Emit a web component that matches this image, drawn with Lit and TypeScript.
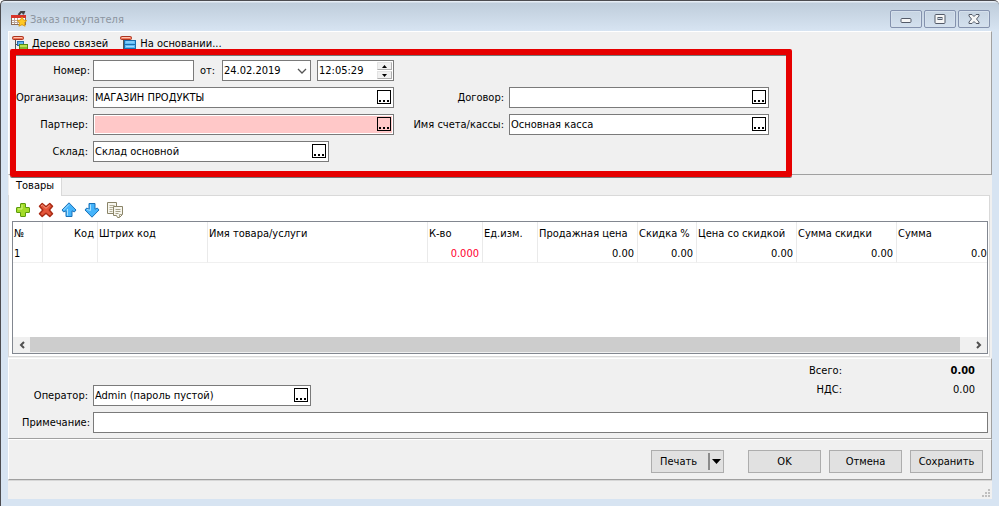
import { LitElement, html, css, svg, nothing } from "lit";
import { customElement, property } from "lit/decorators.js";
import { classMap } from "lit/directives/class-map.js";

const shared = css`
  *,
  *::before,
  *::after {
    box-sizing: border-box;
  }
  button,
  input,
  select {
    font: inherit;
    color: inherit;
    margin: 0;
    padding: 0;
    border: 0;
    border-radius: 0;
    background: none;
    outline: none;
  }
  svg {
    display: block;
    flex: none;
  }
`;

@customElement("lookup-field")
export class LookupField extends LitElement {
  @property() label = "";
  @property() value = "";
  @property({ type: Boolean }) required = false;

  static styles = [
    shared,
    css`
      :host {
        display: block;
        min-width: 0;
      }
      .box {
        display: flex;
        height: 21px;
        padding: 1px;
        border: 1px solid #7a7a7a;
        background: #fff;
      }
      .inner {
        display: flex;
        flex: 1;
        min-width: 0;
        padding: 1px;
        padding-left: 0;
      }
      .required {
        background: #ffc8c8;
      }
      input {
        flex: 1;
        min-width: 0;
      }
      button {
        display: flex;
        align-items: flex-end;
        justify-content: space-between;
        width: 14px;
        height: 14px;
        padding: 1px;
        border: 1px solid #000;
      }
      i {
        width: 2px;
        height: 2px;
        background: #000;
      }
    `,
  ];

  render() {
    return html`<div class="box">
      <div class=${classMap({ inner: true, required: this.required })}>
        <input type="text" aria-label=${this.label} .value=${this.value} />
        <button type="button" aria-label="Выбрать"><i></i><i></i><i></i></button>
      </div>
    </div>`;
  }
}

const orderIcon = svg`
  <path d="M7.500 4L10 1l3-.2-1 2.500" fill="none" stroke="#444" stroke-width="2"/>
  <rect x="0.5" y="4.500" width="14" height="9" fill="#fff" stroke="#8b6b55"/>
  <rect x="0" y="4" width="15" height="3" fill="#d8342a"/>
  <path d="M1 9.500H14M1 11.500H14M3.500 7V13M6.500 7V13" stroke="#b9a59b"/>
  <path d="M11 6l1.600 3 3.200.5-2.300 2.300.6 3.400L11 13.700 7.900 15.200l.6-3.400L6.200 9.500l3.200-.5z" fill="#ffc925" stroke="#d6930b" stroke-width=".8"/>`;
const linksIcon = svg`
  <path d="M3.500 4V13.500H8M3.500 8.500H6" fill="none" stroke="#555"/>
  <rect x=".5" y=".5" width="11" height="3" rx="1" fill="#f3785a" stroke="#a83420"/>
  <path d="M2 1.500h8" stroke="#ffc2ae"/>
  <rect x="5.500" y="5.500" width="6" height="4" fill="#62b6f0" stroke="#276eae"/>
  <rect x="7.500" y="8.500" width="8" height="7" fill="#b7e04c" stroke="#568c13"/>
  <path d="M8 12h7" stroke="#568c13"/>`;
const basisIcon = svg`
  <path d="M3.500 4V13.500H6" fill="none" stroke="#555"/>
  <rect x=".5" y=".5" width="11" height="3" rx="1" fill="#f3785a" stroke="#a83420"/>
  <path d="M2 1.500h8" stroke="#ffc2ae"/>
  <rect x="4.500" y="4.500" width="11" height="11" fill="#5dbcf7" stroke="#1b6eae"/>
  <path d="M5 8.500h10M5 12.500h10" stroke="#1b6eae"/>
  <path d="M6 6h8M6 10.500h8M6 14h8" stroke="#a5dcff"/>`;
const plusIcon = svg`<path d="M6 1.500h4q.5 0 .5.500v3.500h3.500q.5 0 .5.500v4q0 .5-.5.500h-3.500v3.500q0 .5-.5.500h-4q-.5 0-.5-.5v-3.500h-3.500q-.5 0-.5-.5v-4q0-.5.5-.5h3.500v-3.500q0-.5.500-.5z" fill="#a3dc28" stroke="#5b9a0e"/>
  <path d="M7 3v4h-4" fill="none" stroke="#d5f588"/>`;
const crossIcon = svg`<path d="M4.200 1.500L8 4.800 11.800 1.500 14.500 4.200 11.300 8 14.500 11.800 11.800 14.500 8 11.300 4.200 14.500 1.500 11.800 4.800 8 1.500 4.200z" fill="#e4553a" stroke="#a92b14" stroke-width="1.500" stroke-linejoin="round"/>
  <path d="M3 4l1.300-1L8 6.300 11.700 3" fill="none" stroke="#f59a84"/>`;
const upIcon = svg`<path d="M8 .8L15 8 13.300 10 11 8.800V14.500H5V8.800L2.700 10 1 8z" fill="#45b4fb" stroke="#1971b8" stroke-linejoin="round"/>
  <path d="M2.500 8L8 2.500M6.500 7v6.500" fill="none" stroke="#a8e0ff"/>`;
const downIcon = svg`<path d="M8 15.200L15 8 13.300 6 11 7.200V1.500H5V7.200L2.700 6 1 8z" fill="#45b4fb" stroke="#1971b8" stroke-linejoin="round"/>
  <path d="M6.500 2.500v6l-3.500-1" fill="none" stroke="#a8e0ff"/>`;
const copyIcon = svg`<path d="M.5.500h9v11h-9z" fill="#f7f6ee" stroke="#8a8468"/>
  <path d="M2.500 3.500h5M2.500 5.500h5M2.500 7.500h3M2.500 9.500h3" stroke="#b3ae98"/>
  <path d="M6.500 4.500h9v8l-3 3h-2l-1-2h-3z" fill="#f7f6ee" stroke="#8a8468"/>
  <path d="M8.500 7.500h5M8.500 9.500h5M8.500 11.500h3M15 12.500h-2.500V15" fill="none" stroke="#a5a088"/>`;

const icon = (body: unknown) =>
  html`<svg width="16" height="16" viewBox="0 0 16 16" aria-hidden="true">${body}</svg>`;

interface Column {
  title: string;
  value: string;
  size: string;
  right?: boolean;
  alert?: boolean;
}

const columns: Column[] = [
  { title: "№", value: "1", size: "c30" },
  { title: "Код", value: "", size: "c55", right: true },
  { title: "Штрих код", value: "", size: "c110" },
  { title: "Имя товара/услуги", value: "", size: "c220" },
  { title: "К-во", value: "0.000", size: "c55", alert: true },
  { title: "Ед.изм.", value: "", size: "c55" },
  { title: "Продажная цена", value: "0.00", size: "c100" },
  { title: "Скидка %", value: "0.00", size: "c59" },
  { title: "Цена со скидкой", value: "0.00", size: "c100" },
  { title: "Сумма скидки", value: "0.00", size: "c100" },
  { title: "Сумма", value: "0.00", size: "c100" },
];

@customElement("app-root")
export class AppRoot extends LitElement {
  static styles = [
    shared,
    css`
      :host {
        display: flex;
        flex-direction: column;
        min-height: 100vh;
        box-sizing: border-box;
        padding: 0 7px 7px;
        border-top: 1px solid #4c4c50;
        border-left: 1px solid #4c4c50;
        border-radius: 5px 5px 0 0;
        background: linear-gradient(#e6edf5 1px, #bfcddb 2px, #d7e4f2 30px, #d7e4f2);
        font: 11px/14px "DejaVu Sans Condensed", "Noto Sans", sans-serif;
        color: #000;
      }
      .title {
        display: flex;
        align-items: center;
        height: 30px;
        padding: 6px 2px 0 3px;
      }
      h1 {
        flex: 1;
        margin: 0 0 0 3px;
        padding-top: 2px;
        font-size: 11px;
        font-weight: 400;
        color: #8c95a0;
      }
      .sys {
        display: flex;
        gap: 2px;
      }
      .sys button {
        display: grid;
        place-items: center;
        width: 32px;
        height: 18px;
        border: 1px solid #8492ae;
        border-radius: 2px;
        box-shadow: inset 0 0 0 1px #d5e0ec;
      }
      .client {
        display: flex;
        flex-direction: column;
        flex: 1;
        background: #f0f0f0;
      }
      .head {
        position: relative;
        padding-bottom: 12px;
        border: 1px solid #fff;
        border-right-color: #a0a0a0;
        border-bottom-color: #a0a0a0;
      }
      .links {
        display: flex;
        gap: 12px;
        height: 22px;
        padding: 2px 3px 0;
      }
      .links button {
        display: flex;
        align-items: center;
        gap: 4px;
      }
      .form {
        display: grid;
        grid-template-columns: 84px 301px 115px 260px;
        row-gap: 6px;
        padding-top: 6px;
      }
      .label {
        align-self: center;
        padding-right: 5px;
        text-align: right;
        white-space: nowrap;
      }
      .near {
        padding-right: 3px;
      }
      .start {
        grid-column: 1;
      }
      .stock {
        width: 236px;
      }
      .stamp {
        display: flex;
        align-items: center;
      }
      .plain {
        height: 21px;
        padding: 0 1px;
        border: 1px solid #7a7a7a;
        background: #fff;
      }
      .number {
        width: 101px;
        margin-right: 6px;
      }
      .datebox {
        display: grid;
        align-items: center;
        width: 89px;
        margin: 0 6px 0 auto;
        background: #fff;
      }
      .datebox > * {
        grid-area: 1 / 1;
      }
      .datebox svg {
        justify-self: end;
        margin-right: 3px;
        pointer-events: none;
      }
      select {
        appearance: none;
      }
      .time {
        display: flex;
        align-items: center;
        width: 77px;
      }
      .time input {
        flex: 1;
        min-width: 0;
      }
      .spin {
        display: grid;
        gap: 1px;
      }
      .spin button {
        display: grid;
        place-items: center;
        width: 15px;
        height: 8px;
        background: #f0f0f0;
        border: 1px solid #adadad;
        border-top-color: #e3e3e3;
        border-left-color: #e3e3e3;
      }
      .marker {
        position: absolute;
        left: 1px;
        top: 17px;
        width: 782px;
        height: 128px;
        border: 6px solid #e60000;
        border-radius: 2px;
        box-shadow: 0 1px 0 #777, inset 0 1px 0 #777;
        pointer-events: none;
      }
      .tabs {
        display: flex;
        height: 20px;
        margin-top: 1px;
        padding-left: 1px;
        background: linear-gradient(#d9d9d9, #d9d9d9) 0 100% / calc(100% - 2px) 1px no-repeat;
      }
      .tabs button {
        width: 53px;
        border-right: 1px solid #d9d9d9;
        background: #fff;
      }
      .page {
        display: flex;
        flex-direction: column;
        flex: 1;
        margin-right: 2px;
        padding: 6px 1px 2px 3px;
        border: 1px solid #d9d9d9;
        border-top: 0;
        background: #fff;
      }
      .tools {
        display: flex;
        align-items: flex-start;
        gap: 7px;
        padding: 0 3px;
        height: 19px;
      }
      .grid {
        display: flex;
        flex-direction: column;
        flex: 1;
        min-height: 132px;
        border: 1px solid #828790;
        overflow: hidden;
      }
      .rows {
        flex: 1;
        width: 0;
        min-width: 100%;
        overflow: hidden;
      }
      table {
        width: 984px;
        table-layout: fixed;
        border-collapse: separate;
        border-spacing: 0;
      }
      th,
      td {
        padding: 2px 3px 0 1px;
        border-right: 1px solid #eaeaea;
        font-weight: 400;
        text-align: left;
        white-space: nowrap;
      }
      th {
        height: 22px;
      }
      td {
        height: 19px;
        border-bottom: 1px solid #f0f0f0;
      }
      .right {
        text-align: right;
      }
      .alert {
        color: #ff0030;
      }
      .c30 {
        width: 30px;
      }
      .c55 {
        width: 55px;
      }
      .c59 {
        width: 59px;
      }
      .c100 {
        width: 100px;
      }
      .c110 {
        width: 110px;
      }
      .c220 {
        width: 220px;
      }
      .scroll {
        display: flex;
        height: 16px;
        padding-bottom: 1px;
        background: #f0f0f0;
      }
      .scroll button {
        display: grid;
        place-items: center;
        width: 17px;
      }
      .track {
        flex: 1;
        padding-right: 10px;
      }
      .thumb {
        height: 100%;
        background: #cdcdcd;
      }
      .foot {
        display: grid;
        grid-template-columns: 84px 218px 1fr;
        row-gap: 6px;
        margin-top: 1px;
        padding: 4px 3px 5px 0;
        border: 1px solid #fff;
        border-right-color: #a0a0a0;
        border-bottom-color: #a0a0a0;
      }
      .operator {
        align-self: end;
      }
      .foot .label.operator {
        padding-bottom: 3px;
      }
      .totals {
        display: grid;
        grid-template-columns: auto 133px;
        align-content: start;
        justify-content: end;
        row-gap: 5px;
        height: 43px;
        margin: 0;
        padding: 1px 13px 0 0;
        text-align: right;
      }
      .totals dt,
      .totals dd {
        margin: 0;
      }
      .sum {
        font-weight: 700;
      }
      .note {
        grid-column: 2 / 4;
        width: 100%;
      }
      .actions {
        display: flex;
        justify-content: flex-end;
        gap: 8px;
        padding: 10px 8px 6px;
        border: 1px solid #fff;
        border-right-color: #a0a0a0;
        border-bottom-color: #a0a0a0;
      }
      .actions button {
        height: 23px;
        border: 1px solid #adadad;
        background: #e1e1e1;
      }
      .wide {
        width: 73px;
      }
      .actions .print {
        display: flex;
        align-items: center;
        justify-content: space-between;
        width: 73px;
        margin-right: 16px;
        padding: 0 1px 0 8px;
      }
      .drop {
        display: flex;
        align-items: center;
        height: 17px;
        padding-left: 1px;
        border-left: 2px solid #8a8a8a;
      }
      .status {
        display: flex;
        justify-content: flex-end;
        align-items: flex-end;
        height: 19px;
        padding: 2px;
        border-top: 1px solid #d7d7d7;
      }
    `,
  ];

  render() {
    return html`
      <header class="title">
        ${icon(orderIcon)}
        <h1>Заказ покупателя</h1>
        <div class="sys">
          <button type="button" aria-label="Свернуть">
            <svg width="12" height="10"><rect x="1" y="4.500" width="10" height="4" rx="1" fill="#f6f6f6" stroke="#535a68" /></svg>
          </button>
          <button type="button" aria-label="Развернуть">
            <svg width="12" height="10">
              <rect x="1" y=".5" width="10" height="9" rx="1" fill="#f6f6f6" stroke="#535a68" />
              <rect x="4" y="3.500" width="4" height="2" fill="#c9d5e2" stroke="#535a68" />
            </svg>
          </button>
          <button type="button" aria-label="Закрыть">
            <svg width="12" height="10">
              <path d="M1 .5h3l2 2 2-2h3v1.500l-2.500 3 2.500 3v1.500h-3l-2-2-2 2h-3V8l2.500-3L1 2z" fill="#f6f6f6" stroke="#535a68" />
            </svg>
          </button>
        </div>
      </header>
      <main class="client">
        <section class="head">
          <div class="links">
            <button type="button">${icon(linksIcon)}Дерево связей</button>
            <button type="button">${icon(basisIcon)}На основании...</button>
          </div>
          <div class="form">
            <label class="label near" for="number">Номер:</label>
            <div class="stamp">
              <input class="plain number" id="number" type="text" />
              <label for="date">от:</label>
              <div class="datebox">
                <select class="plain" id="date">
                  <option>24.02.2019</option>
                </select>
                <svg width="12" height="8"><path d="M2 2l4 4 4-4" fill="none" stroke="#555" stroke-width="1.300" /></svg>
              </div>
              <div class="plain time">
                <input type="text" aria-label="Время" value="12:05:29" />
                <div class="spin">
                  <button type="button" aria-label="Больше">
                    <svg width="5" height="3"><path d="M0 3L2.500 0 5 3z" /></svg>
                  </button>
                  <button type="button" aria-label="Меньше">
                    <svg width="5" height="3"><path d="M0 0L2.500 3 5 0z" /></svg>
                  </button>
                </div>
              </div>
            </div>
            <label class="label start" for="org">Организация:</label>
            <lookup-field id="org" label="Организация" value="МАГАЗИН ПРОДУКТЫ"></lookup-field>
            <label class="label" for="contract">Договор:</label>
            <lookup-field id="contract" label="Договор"></lookup-field>
            <label class="label" for="partner">Партнер:</label>
            <lookup-field id="partner" label="Партнер" required></lookup-field>
            <label class="label" for="account">Имя счета/кассы:</label>
            <lookup-field id="account" label="Имя счета/кассы" value="Основная касса"></lookup-field>
            <label class="label" for="stock">Склад:</label>
            <lookup-field class="stock" id="stock" label="Склад" value="Склад основной"></lookup-field>
          </div>
          <div class="marker"></div>
        </section>
        <div class="tabs" role="tablist">
          <button type="button" role="tab" aria-selected="true">Товары</button>
        </div>
        <section class="page" role="tabpanel">
          <div class="tools">
            <button type="button" aria-label="Добавить">${icon(plusIcon)}</button>
            <button type="button" aria-label="Удалить">${icon(crossIcon)}</button>
            <button type="button" aria-label="Вверх">${icon(upIcon)}</button>
            <button type="button" aria-label="Вниз">${icon(downIcon)}</button>
            <button type="button" aria-label="Копировать">${icon(copyIcon)}</button>
          </div>
          <div class="grid">
            <div class="rows">
              <table>
                <thead>
                  <tr>
                    ${columns.map((c) => html`<th class=${classMap({ [c.size]: true, right: !!c.right })}>${c.title}</th>`)}
                  </tr>
                </thead>
                <tbody>
                  <tr>
                    ${columns.map(
                      (c) => html`<td class=${classMap({ right: c.value.includes("."), alert: !!c.alert })}>${c.value || nothing}</td>`
                    )}
                  </tr>
                </tbody>
              </table>
            </div>
            <div class="scroll">
              <button type="button" aria-label="Влево">
                <svg width="8" height="8"><path d="M6 1L3 4l3 3" fill="none" stroke="#505050" stroke-width="2" /></svg>
              </button>
              <div class="track"><div class="thumb"></div></div>
              <button type="button" aria-label="Вправо">
                <svg width="8" height="8"><path d="M2 1l3 3-3 3" fill="none" stroke="#505050" stroke-width="2" /></svg>
              </button>
            </div>
          </div>
        </section>
        <section class="foot">
          <label class="label operator" for="operator">Оператор:</label>
          <lookup-field class="operator" id="operator" label="Оператор" value="Admin (пароль пустой)"></lookup-field>
          <dl class="totals">
            <dt>Всего:</dt>
            <dd class="sum">0.00</dd>
            <dt>НДС:</dt>
            <dd>0.00</dd>
          </dl>
          <label class="label near" for="note">Примечание:</label>
          <input class="plain note" id="note" type="text" />
        </section>
        <section class="actions">
          <button class="print" type="button">
            Печать
            <span class="drop"><svg width="11" height="6"><path d="M1 0h9L5.500 5z" /></svg></span>
          </button>
          <button class="wide" type="button">OK</button>
          <button class="wide" type="button">Отмена</button>
          <button class="wide" type="button">Сохранить</button>
        </section>
        <footer class="status">
          <svg width="8" height="8" fill="#bfbfbf">
            <path d="M6 0h2v2h-2zM3 3h2v2h-2zM6 3h2v2h-2zM0 6h2v2h-2zM3 6h2v2h-2zM6 6h2v2h-2z" />
          </svg>
        </footer>
      </main>
    `;
  }
}
